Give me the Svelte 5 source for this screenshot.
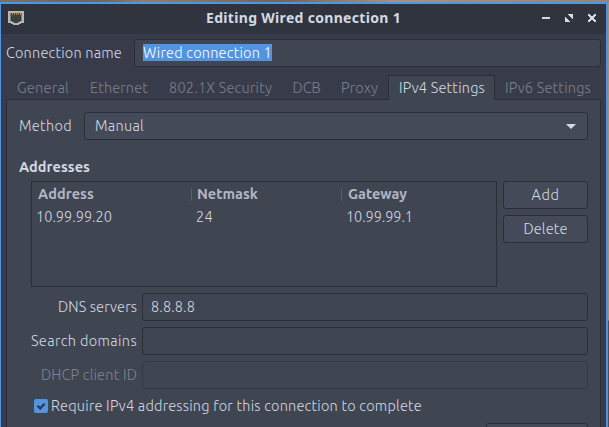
<script>
  const tabs = [
    { name: 'General', text: 52, width: 72 },
    { name: 'Ethernet', text: 58, width: 80 },
    { name: '802.1X Security', text: 103, width: 123 },
    { name: 'DCB', text: 28, width: 49 },
    { name: 'Proxy', text: 37, width: 57 },
    { name: 'IPv4 Settings', text: 86, width: 107 },
    { name: 'IPv6 Settings', text: 86, width: 106 }
  ];
  const active = 'IPv4 Settings';
  const columns = [
    { title: 'Address', value: '10.99.99.20', titleWidth: 56, valueWidth: 76, width: 160 },
    { title: 'Netmask', value: '24', titleWidth: 61, valueWidth: 17, width: 150 },
    { title: 'Gateway', value: '10.99.99.1', titleWidth: 59, valueWidth: 67, width: 154 }
  ];
  const fields = [
    { label: 'DNS servers', width: 79, value: '8.8.8.8', off: false },
    { label: 'Search domains', width: 106, value: '', off: false },
    { label: 'DHCP client ID', width: 96, value: '', off: true }
  ];

  // Spreads the tracking of a label over its allotted width.
  function track(node, width) {
    const natural = node.getBoundingClientRect().width;
    const gap = (width - natural) / node.textContent.length;
    node.style.letterSpacing = `${gap}px`;
  }
</script>

<div class="desktop">
  <div class="window">
    <header>
      <svg class="port" width="16" height="14" viewBox="0 0 16 14">
        <path d="M0 0h16v12h-3v1h-2v1H5v-1H3v-1H0z" fill="#b4b5b5" />
        <path d="M2.5 2h11v8H12v1h-2v1H6v-1H4v-1H2.500z" fill="#3f403e" />
        <path d="M4 2h1v2H4zM6 2h1v2H6zM8 2h1v2H8zM10 2h1v2h-1zM12 2h1v2h-1z" fill="#a88a48" />
      </svg>
      <h1><span use:track={195}>Editing Wired connection 1</span></h1>
      <div class="controls">
        <svg width="8" height="8" viewBox="0 0 8 8"><path d="M0 3h8v2H0z" /></svg>
        <svg width="8" height="8" viewBox="0 0 8 8"><path d="M3 0h5v5H7V4H6V3H5V2H4V1H3zM0 3h1v1h1v1h1v1h1v1h1v1H0z" /></svg>
        <svg width="8" height="8" viewBox="0 0 8 8"><path d="M0 0h2v1h1v1h2V1h1V0h2v2H7v1H6v2h1v1h1v2H6V7H5V6H3v1H2v1H0V6h1V5h1V3H1V2H0z" /></svg>
      </div>
    </header>

    <div class="name-row">
      <label for="name"><span use:track={116}>Connection name</span></label>
      <div class="entry" id="name"><span class="selected" use:track={129}>Wired connection 1</span></div>
    </div>

    <nav>
      {#each tabs as tab}
        <div class="tab" class:active={tab.name === active} style:width="{tab.width}px">
          <span use:track={tab.text}>{tab.name}</span>
        </div>
      {/each}
    </nav>

    <main>
      <div class="method">
        <div class="method-label"><span use:track={53}>Method</span></div>
        <div class="combo">
          <span use:track={49}>Manual</span>
          <svg width="10" height="5" viewBox="0 0 10 5"><path d="M0 0h10L5 5z" /></svg>
        </div>
      </div>

      <h2><span use:track={71}>Addresses</span></h2>

      <div class="addresses">
        <div class="table">
          {#each columns as col}
            <div class="col" style:width="{col.width}px">
              <div class="th"><span use:track={col.titleWidth}>{col.title}</span></div>
              <div class="td"><span use:track={col.valueWidth}>{col.value}</span></div>
            </div>
          {/each}
        </div>
        <div class="actions">
          <div class="button"><span use:track={28}>Add</span></div>
          <div class="button"><span use:track={44}>Delete</span></div>
        </div>
      </div>

      <div class="fields">
        {#each fields as field}
          <div class="field" class:off={field.off}>
            <div class="field-label"><span use:track={field.width}>{field.label}</span></div>
            <div class="entry">
              {#if field.value}<span use:track={44}>{field.value}</span>{/if}
            </div>
          </div>
        {/each}
      </div>

      <div class="require">
        <div class="check">
          <svg width="14" height="14" viewBox="0 0 14 14"><path d="M3.5 6.8l2.7 2.6 4.4-4.6" /></svg>
        </div>
        <span use:track={371}>Require IPv4 addressing for this connection to complete</span>
      </div>

      <div class="routes"></div>
    </main>
  </div>
</div>

<style>
  :global(body) {
    background: #383c4a;
    overflow: hidden;
  }
  .desktop {
    box-sizing: border-box;
    width: 609px;
    height: 427px;
    padding: 2px 1px 0 0;
    overflow: hidden;
    background:
      linear-gradient(90deg, #77716a, #6a665c 16%, #8b806c 24%, #6c665a 46%, #a3957f 65%, #8f8779) top / 100% 2px no-repeat,
      linear-gradient(#9c907c 320px, #4c4c52 321px);
    font: 300 14.5px/20px Ubuntu, 'Noto Sans', sans-serif;
    color: #d3dae3;
  }
  .desktop * {
    box-sizing: border-box;
  }
  span {
    display: inline-block;
    white-space: nowrap;
  }
  .window {
    height: 425px;
    border: solid #5294e2;
    border-width: 2px 2px 0 1px;
    background: #383c4a;
    overflow: hidden;
  }
  header {
    display: flex;
    align-items: center;
    height: 30px;
    padding: 0 10px 0 7px;
    background: #2f343f;
  }
  .port {
    margin-bottom: 2px;
  }
  h1 {
    flex: 1;
    margin: 0 0 2px;
    padding-left: 182px;
    font: bold 14px/20px 'Noto Sans', sans-serif;
  }
  .controls {
    display: flex;
    gap: 15px;
    margin-bottom: 2px;
    fill: #d3dae3;
  }
  .name-row {
    display: flex;
    align-items: center;
    height: 28px;
    margin: 5px 5px 0;
  }
  .name-row label {
    width: 128px;
  }
  .entry {
    display: flex;
    flex: 1;
    align-items: center;
    height: 28px;
    padding-left: 8px;
    border: 1px solid #2b2e39;
    border-radius: 3px;
    background: #404552;
  }
  .selected {
    height: 17px;
    line-height: 17px;
    margin-bottom: 1px;
    background: #5294e2;
    color: #fff;
  }
  nav {
    position: relative;
    display: flex;
    height: 25px;
    margin: 8px 5px 0;
    padding-left: 1px;
  }
  .tab {
    display: flex;
    justify-content: center;
    height: 24px;
    padding-top: 3px;
    color: #7b808b;
  }
  .tab.active {
    height: 25px;
    padding: 2px 0 0 1px;
    border: solid #2b2e39;
    border-width: 1px 1px 0;
    background: #404552;
    color: #d3dae3;
  }
  main {
    height: 340px;
    margin: -1px 5px 0;
    padding: 12px 12px 0;
    border: 1px solid #2b2e39;
    background: #404552;
  }
  .method {
    display: flex;
    align-items: center;
  }
  .method-label {
    width: 65px;
  }
  .combo {
    display: flex;
    flex: 1;
    align-items: center;
    justify-content: space-between;
    height: 28px;
    padding: 0 11px 0 10px;
    border: 1px solid #2b2e39;
    border-radius: 3px;
    background: #444a58;
    fill: #d3dae3;
  }
  h2 {
    margin: 17px 0 4px;
    font: 600 14.5px/20px Ubuntu, 'Noto Sans', sans-serif;
  }
  .addresses {
    display: flex;
    gap: 6px;
    padding-left: 12px;
  }
  .table {
    display: flex;
    width: 466px;
    height: 106px;
    border: 1px solid #2b2e39;
  }
  .th {
    height: 24px;
    padding: 2px 0 0 5px;
    font-weight: 600;
    color: #b1b7c2;
    background: linear-gradient(#595e69, #595e69) right 6px / 1px 13px no-repeat;
  }
  .col:first-child .th {
    padding-left: 6px;
  }
  .col:last-child .th {
    padding-left: 6px;
    background: none;
  }
  .td {
    padding: 1px 0 0 4px;
  }
  .actions {
    display: flex;
    flex: 1;
    flex-direction: column;
    gap: 6px;
  }
  .button {
    display: flex;
    align-items: center;
    justify-content: center;
    height: 28px;
    border: 1px solid #2b2e39;
    border-radius: 3px;
    background: #444a58;
  }
  .fields {
    display: flex;
    flex-direction: column;
    gap: 6px;
    margin-top: 6px;
  }
  .field {
    display: flex;
    align-items: center;
  }
  .field-label {
    width: 123px;
    padding-right: 5px;
    text-align: right;
  }
  .off {
    color: #7f8490;
  }
  .off .entry {
    border-color: #363a47;
  }
  .require {
    display: flex;
    align-items: center;
    gap: 3px;
    height: 20px;
    margin-top: 7px;
    padding-left: 15px;
  }
  .check {
    width: 14px;
    height: 14px;
    border-radius: 2px;
    background: #5294e2;
  }
  .check svg {
    display: block;
    fill: none;
    stroke: #2f343f;
    stroke-width: 2.2;
  }
  .routes {
    height: 28px;
    margin: 7px 0 0 auto;
    width: 102px;
    border: 1px solid #2b2e39;
    border-radius: 3px;
    background: #444a58;
  }
</style>
